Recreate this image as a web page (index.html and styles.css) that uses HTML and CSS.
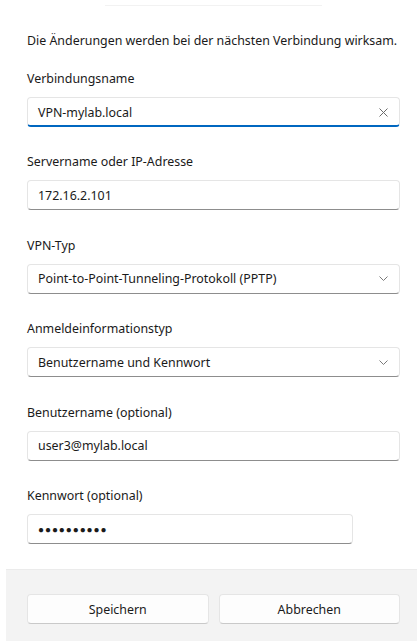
FILE: index.html
```html
<!DOCTYPE html>
<html lang="de">
<head>
    <meta charset="UTF-8">
    <meta name="viewport" content="width=device-width, initial-scale=1.0">
    <title>VPN-Verbindung bearbeiten</title>
    <link rel="stylesheet" href="styles.css">
</head>
<body>
    <div class="dialog">
        <div class="top-line"></div>
        <div class="content">
            <p class="intro">Die Änderungen werden bei der nächsten Verbindung wirksam.</p>

            <div class="field">
                <label class="field-label">Verbindungsname</label>
                <div class="box focused">
                    <span class="value">VPN-mylab.local</span>
                    <svg class="icon" width="9" height="9" viewBox="0 0 9 9">
                        <path d="M0.5 0.5 L8.5 8.5 M8.5 0.5 L0.5 8.5" stroke="#6b6b6b" stroke-width="1" fill="none"/>
                    </svg>
                </div>
            </div>

            <div class="field">
                <label class="field-label">Servername oder IP-Adresse</label>
                <div class="box">
                    <span class="value">172.16.2.101</span>
                </div>
            </div>

            <div class="field">
                <label class="field-label">VPN-Typ</label>
                <div class="box">
                    <span class="value">Point-to-Point-Tunneling-Protokoll (PPTP)</span>
                    <svg class="icon" width="9" height="5" viewBox="0 0 9 5">
                        <path d="M0.5 0.5 L4.5 4.5 L8.5 0.5" stroke="#7a7a7a" stroke-width="1" fill="none"/>
                    </svg>
                </div>
            </div>

            <div class="field">
                <label class="field-label">Anmeldeinformationstyp</label>
                <div class="box">
                    <span class="value">Benutzername und Kennwort</span>
                    <svg class="icon" width="9" height="5" viewBox="0 0 9 5">
                        <path d="M0.5 0.5 L4.5 4.5 L8.5 0.5" stroke="#7a7a7a" stroke-width="1" fill="none"/>
                    </svg>
                </div>
            </div>

            <div class="field">
                <label class="field-label">Benutzername (optional)</label>
                <div class="box">
                    <span class="value">user3@mylab.local</span>
                </div>
            </div>

            <div class="field">
                <label class="field-label">Kennwort (optional)</label>
                <div class="box short">
                    <span class="value dots">●●●●●●●●●●</span>
                </div>
            </div>
        </div>

        <div class="footer">
            <button class="btn">Speichern</button>
            <button class="btn">Abbrechen</button>
        </div>
    </div>
</body>
</html>
```

FILE: styles.css
```css
body {
    margin: 0;
    padding: 0;
    background: #fff;
    font-family: "Noto Sans", "Open Sans", sans-serif;
    font-size: 12.4px;
    color: #1a1a1a;
    overflow: hidden;
}

.dialog {
    height: 641px;
    display: flex;
    flex-direction: column;
}

.top-line {
    height: 1px;
    margin: 5px 95px 0 105px;
    background: #f2f2f2;
}

.content {
    flex: 1;
    padding: 25px 17px 0 27px;
}

.intro {
    margin: 0 0 18px;
    line-height: 20px;
    white-space: nowrap;
}

.field {
    margin-bottom: 25.4px;
}

.field-label {
    display: block;
    line-height: 20px;
    margin-bottom: 8px;
}

.box {
    height: 30px;
    box-sizing: border-box;
    display: flex;
    align-items: center;
    justify-content: space-between;
    padding: 0 11px 0 10px;
    background: #fff;
    border: 1px solid #e5e5e5;
    border-bottom-color: #8d8d8d;
    border-radius: 4px;
}

.box.focused {
    border-bottom: 2px solid #0067c0;
    padding-top: 1px;
}

.box.short {
    width: 326px;
}

.value {
    white-space: nowrap;
}

.dots {
    font-size: 10px;
    letter-spacing: 0.9px;
}

.icon {
    flex-shrink: 0;
}

.footer {
    height: 72px;
    margin-left: 6px;
    box-sizing: border-box;
    padding: 24px 17px 0 21px;
    background: #f3f3f3;
    border-top: 1px solid #ebebeb;
    display: flex;
    gap: 10px;
}

.btn {
    flex: 1;
    height: 30px;
    font-family: inherit;
    font-size: 12.4px;
    color: #1a1a1a;
    background: #fdfdfd;
    border: 1px solid #e5e5e5;
    border-bottom-color: #c9c9c9;
    border-radius: 4px;
}
```
